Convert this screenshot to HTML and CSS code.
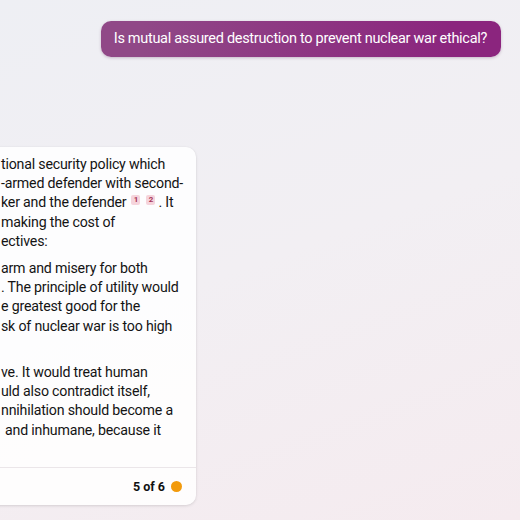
FILE: index.html
```html
<!DOCTYPE html>
<html lang="en">
<head>
<meta charset="utf-8">
<title>Chat</title>
<link rel="stylesheet" href="styles.css">
</head>
<body>
<main class="page">
  <div class="user-row">
    <div class="bubble">Is mutual assured destruction to prevent nuclear war ethical?</div>
  </div>
  <section class="card">
    <div class="card-body">
      <p class="para">
        <span class="line">tional security policy which</span>
        <span class="line">-armed defender with second-</span>
        <span class="line">ker and the defender<span class="cite">1</span><span class="cite">2</span>. It</span>
        <span class="line">making the cost of</span>
        <span class="line">ectives:</span>
      </p>
      <ul class="list">
        <li>
          <span class="line">arm and misery for both</span>
          <span class="line">. The principle of utility would</span>
          <span class="line">e greatest good for the</span>
          <span class="line">sk of nuclear war is too high</span>
          <span class="line">&nbsp;</span>
        </li>
        <li>
          <span class="line">ve. It would treat human</span>
          <span class="line">uld also contradict itself,</span>
          <span class="line">nnihilation should become a</span>
          <span class="line indent">and inhumane, because it</span>
          <span class="line">&nbsp;</span>
        </li>
      </ul>
    </div>
    <footer class="card-foot">
      <span class="count">5 of 6</span>
      <span class="dot"></span>
    </footer>
  </section>
</main>
</body>
</html>
```
FILE: styles.css
```css
html, body {
  margin: 0;
  padding: 0;
}
body {
  width: 520px;
  height: 520px;
  overflow: hidden;
  font-family: Roboto, "Liberation Sans", sans-serif;
  color: #141414;
  background: linear-gradient(160deg, #eeeff4 0%, #f2eff3 50%, #f5ebef 100%);
}
.page {
  display: flex;
  flex-direction: column;
  padding-top: 21px;
}
.user-row {
  display: flex;
  justify-content: flex-end;
  padding-right: 19px;
}
.bubble {
  height: 36px;
  line-height: 36px;
  padding: 0 14px 0 13px;
  border-radius: 10px;
  color: #fff;
  font-size: 14.5px;
  letter-spacing: -0.3px;
  background: linear-gradient(90deg, #904887 10%, #8b257e 88%);
  box-shadow: 0 1px 3px rgba(80, 20, 70, 0.25);
  white-space: nowrap;
}
.card {
  margin-top: 90px;
  margin-left: -24px;
  width: 220px;
  background: rgba(255, 255, 255, 0.85);
  border-radius: 10px;
  box-shadow: 0 1px 3px rgba(0, 0, 0, 0.12), 0 0 1px rgba(0, 0, 0, 0.08);
}
.card-body {
  padding: 8px 12px 8px 25px;
  font-size: 14.2px;
  letter-spacing: -0.2px;
  line-height: 19.2px;
  white-space: nowrap;
}
.para {
  margin: 0;
}
.line {
  display: block;
}
.indent {
  padding-left: 4px;
}
.list {
  list-style: none;
  margin: 0;
  padding: 0;
}
.list li {
  margin-top: 8px;
}
.cite {
  display: inline-block;
  width: 9px;
  height: 10px;
  margin-left: 5px;
  line-height: 10px;
  font-size: 8px;
  font-weight: 700;
  letter-spacing: 0;
  text-align: center;
  color: #a8365a;
  background: #f5d4dc;
  border-radius: 2px;
  vertical-align: 5px;
}
.cite + .cite {
  margin-left: 6px;
  margin-right: 3px;
}
.card-foot {
  display: flex;
  justify-content: flex-end;
  align-items: center;
  gap: 6px;
  height: 37px;
  padding-right: 14px;
  border-top: 1px solid #ebe6e9;
}
.count {
  font-size: 12.5px;
  font-weight: 700;
  color: #111;
}
.dot {
  width: 11px;
  height: 11px;
  border-radius: 50%;
  background: #f29a0c;
}
```
